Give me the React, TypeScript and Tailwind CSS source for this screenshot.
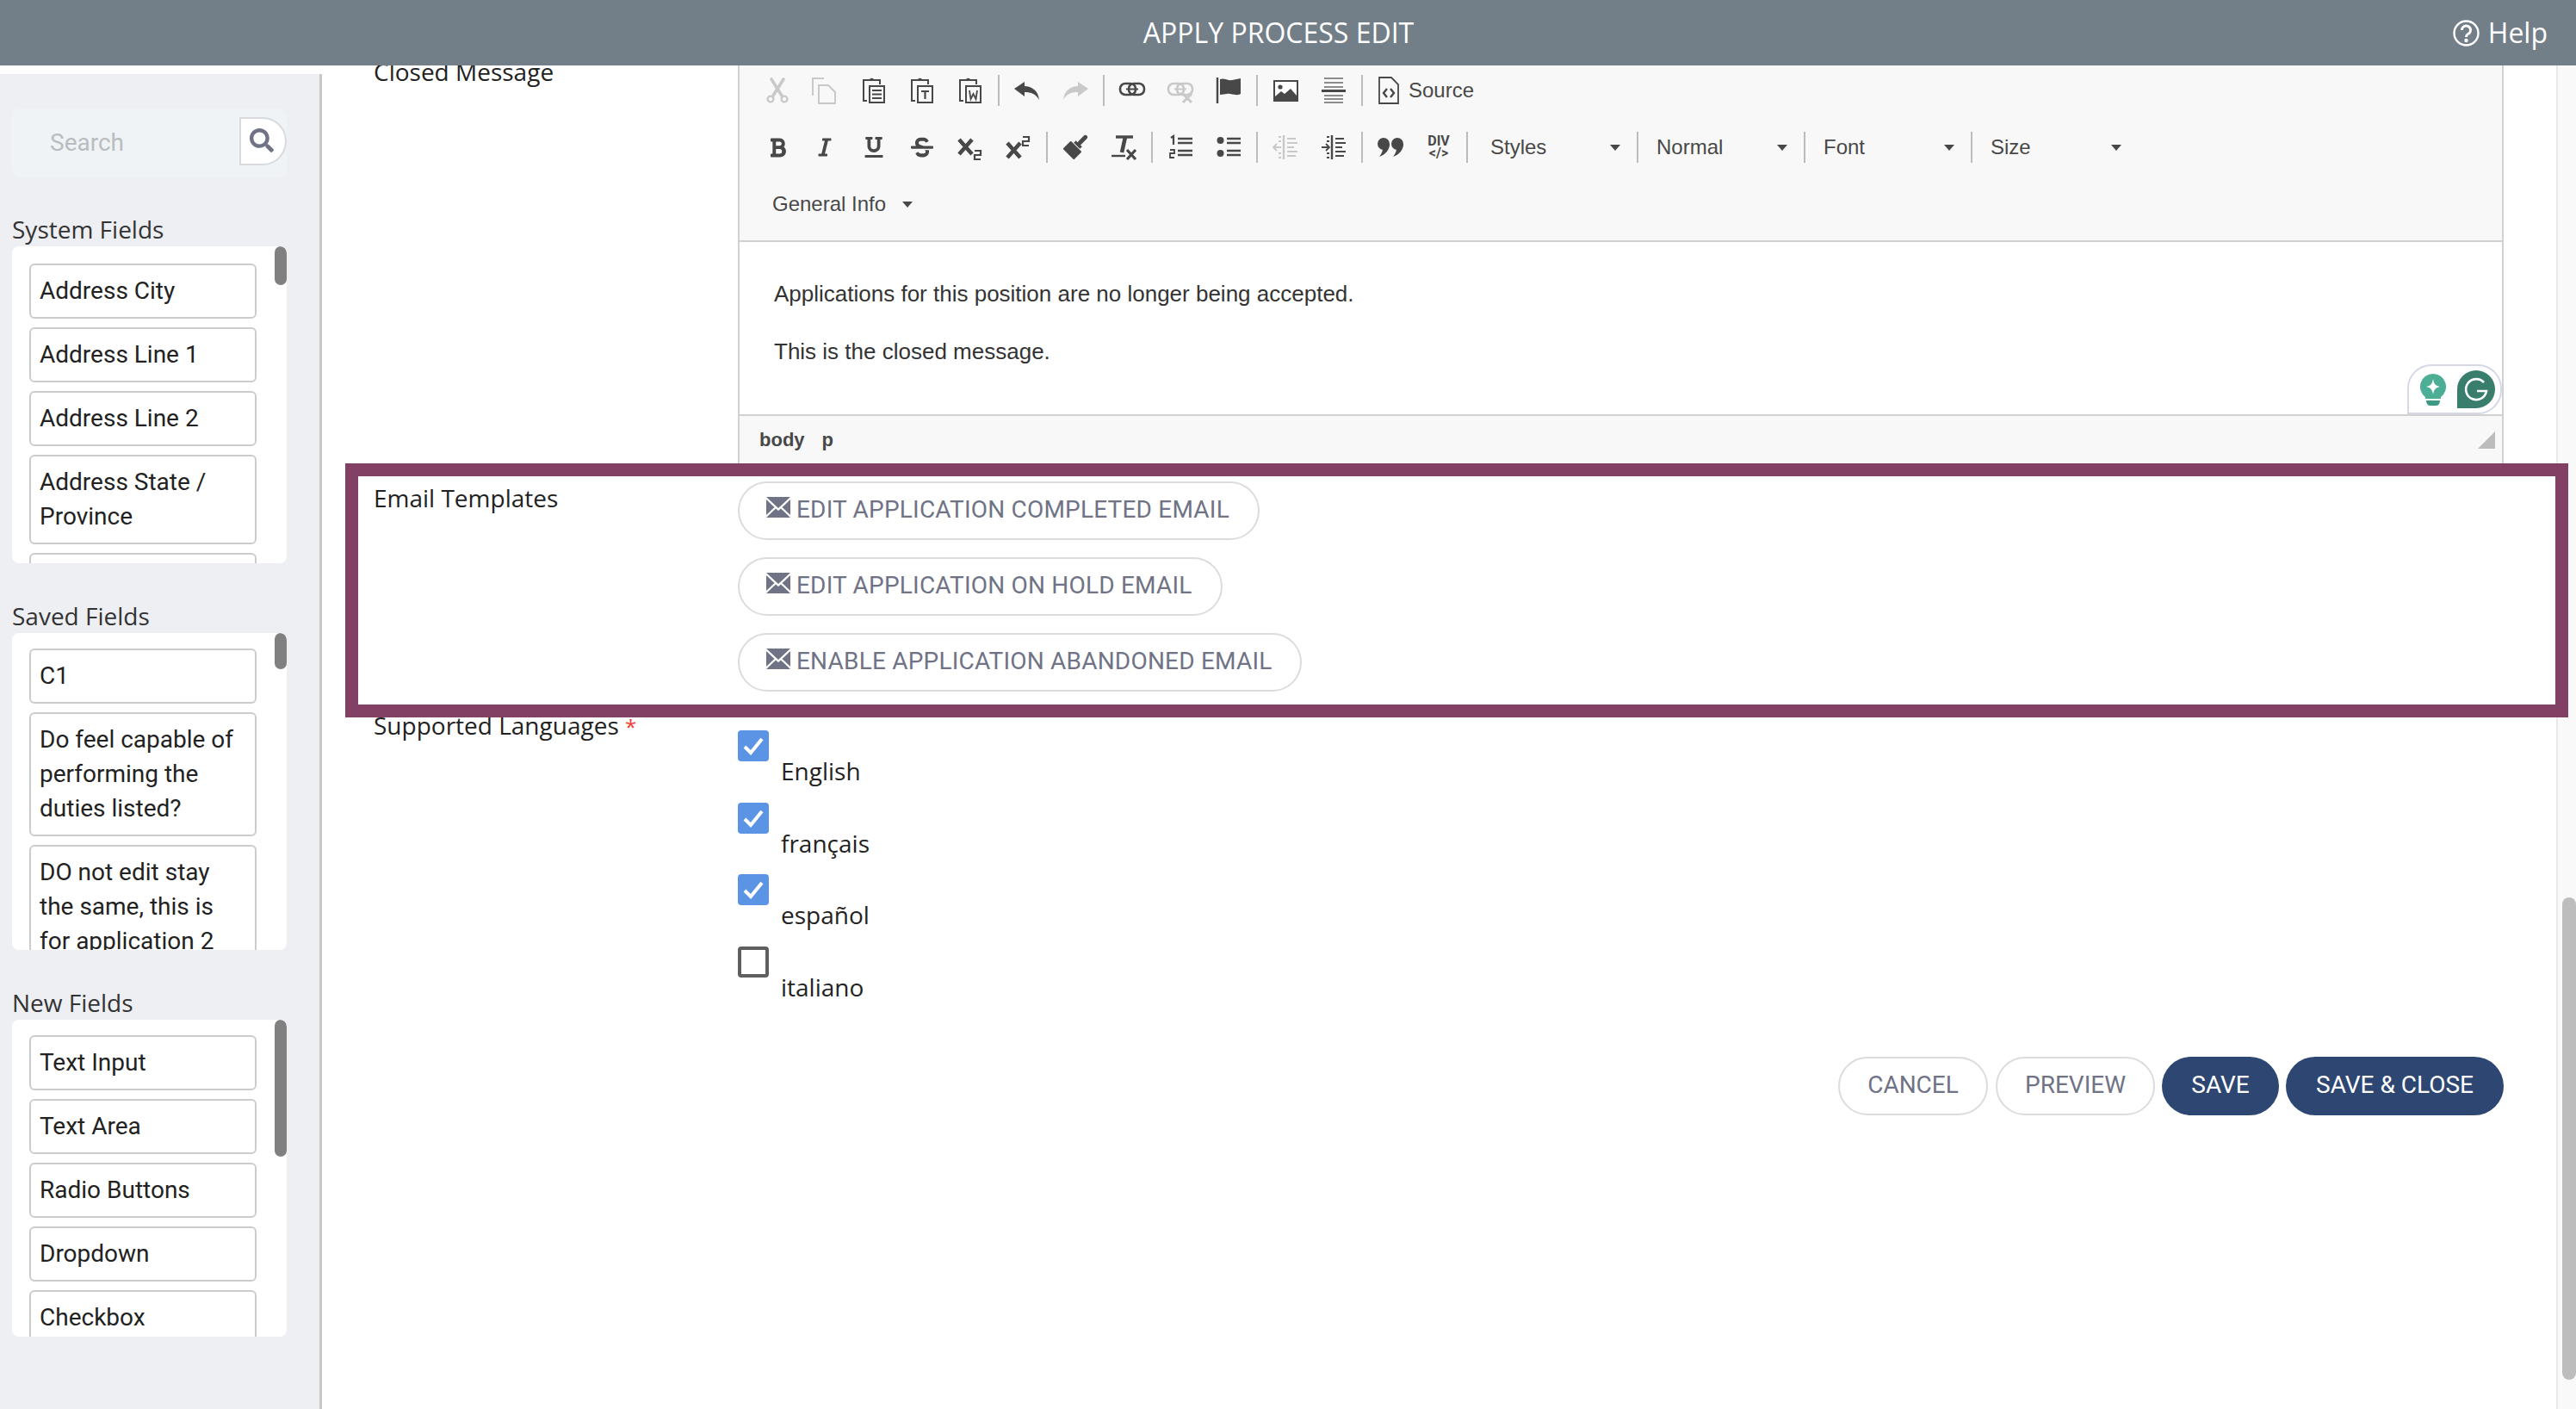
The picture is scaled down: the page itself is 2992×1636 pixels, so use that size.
import React from "react";
import { FaSearch, FaBold, FaItalic, FaUnderline, FaStrikethrough } from "react-icons/fa";

const DARK = "#484848";
const OFF = "#c9c9c9";

function Ic({ children, w = 32, h = 32 }: { children: React.ReactNode; w?: number; h?: number }) {
  return (
    <svg width={w} height={h} viewBox="0 0 32 32" fill="none">
      {children}
    </svg>
  );
}

const Cut = () => (
  <Ic>
    <g stroke={OFF} strokeWidth="3.6" strokeLinecap="round">
      <path d="M9 3 L21 22" />
      <path d="M23 3 L11 22" />
      <circle cx="8" cy="26" r="3.4" strokeWidth="2.4" />
      <circle cx="24" cy="26" r="3.4" strokeWidth="2.4" />
    </g>
  </Ic>
);
const Copy = () => (
  <div className="mr-[5px]">
    <Ic>
      <g stroke={OFF} strokeWidth="2" fill="#f8f8f8">
        <path d="M3 22 V2 H16" />
        <path d="M10 10 H21 L29 18 V31 H10 Z" />
      </g>
    </Ic>
  </div>
);
const Board = ({ children }: { children: React.ReactNode }) => (
  <Ic>
    <path d="M9 4 H4 V28 H8" stroke={DARK} strokeWidth="2" />
    <path d="M18 4 H23 V9" stroke={DARK} strokeWidth="2" />
    <path d="M9 5 V3 H11 A3 3 0 0 1 16 3 H18 V5 Z" fill={DARK} />
    <rect x="11" y="11" width="17" height="19" stroke={DARK} strokeWidth="2" fill="#f8f8f8" />
    {children}
  </Ic>
);
const Paste = () => (
  <Board>
    <path d="M14 16 H25 M14 20.5 H25 M14 25 H25" stroke={DARK} strokeWidth="2" />
  </Board>
);
const PasteT = () => (
  <Board>
    <path d="M15 17 H24 M19.5 17 V26" stroke={DARK} strokeWidth="2.2" />
  </Board>
);
const PasteW = () => (
  <Board>
    <path d="M15 16 L16.5 26 L19.5 20 L22.5 26 L24 16" stroke={DARK} strokeWidth="1.8" />
  </Board>
);
const Undo = ({ c = DARK, flip = false }: { c?: string; flip?: boolean }) => (
  <svg width="30" height="21" viewBox="0 0 30 21" style={flip ? { transform: "scaleX(-1)" } : undefined}>
    <path d="M0 8 L12 0 V5 C20 5 28 10 29 21 C25 14 20 12 12 12 V17 Z" fill={c} />
  </svg>
);
const LinkI = ({ c = DARK, x = false }: { c?: string; x?: boolean }) => (
  <Ic>
    <g stroke={c} strokeWidth="2.6" fill="none">
      <rect x="2" y="8" width="18" height="13" rx="6" />
      <rect x="12" y="8" width="18" height="13" rx="6" />
      <path d="M9 14.5 H23" strokeWidth="2" />
    </g>
    {x && <path d="M19 20 L29 30 M29 20 L19 30" stroke={c} strokeWidth="3" />}
  </Ic>
);
const Flag = () => (
  <Ic>
    <path d="M3 1 V31" stroke={DARK} strokeWidth="2.4" />
    <path d="M6 3 C11 1 15 5 20 4 L30 2 V20 C24 23 19 19 14 20 L6 21 Z" fill={DARK} />
  </Ic>
);
const ImageI = () => (
  <Ic>
    <rect x="3" y="5" width="27" height="23" stroke={DARK} strokeWidth="2" fill="#fff" />
    <circle cx="10" cy="12" r="2.6" fill={DARK} />
    <path d="M4 27 V23 L11 17 L15 20 L22 14 L29 22 V27 Z" fill={DARK} />
  </Ic>
);
const Hr = () => (
  <Ic>
    <g stroke="#8c8c8c" strokeWidth="1.8">
      <path d="M5 2 H27 M5 7 H27 M5 12 H27 M5 22 H27 M5 26 H27 M5 30 H27" />
    </g>
    <path d="M2 16.5 H30" stroke={DARK} strokeWidth="3" />
  </Ic>
);
const Doc = () => (
  <svg width="24" height="32" viewBox="0 0 24 32" fill="none">
    <path d="M1 1 H15 L23 9 V31 H1 Z" stroke={DARK} strokeWidth="1.8" fill="#f8f8f8" />
    <path d="M10 14 L6 19 L10 24 M14 14 L18 19 L14 24" stroke={DARK} strokeWidth="2.4" />
  </svg>
);
const Brush = () => (
  <Ic>
    <g transform="rotate(45 16 16)" fill={DARK}>
      <rect x="13.5" y="-3" width="5" height="14" rx="2.5" />
      <rect x="11" y="10" width="10" height="3.5" />
      <rect x="7" y="14.5" width="18" height="13" rx="1" />
    </g>
  </Ic>
);
const ClearFmt = () => (
  <Ic>
    <path d="M7 4 H27" stroke={DARK} strokeWidth="3.4" />
    <path d="M18 4 L14 22" stroke={DARK} strokeWidth="4.6" />
    <path d="M2 26 H18" stroke={DARK} strokeWidth="2.4" />
    <path d="M20 19 L30 30 M30 19 L20 30" stroke={DARK} strokeWidth="3.2" />
  </Ic>
);
const SubI = () => (
  <Ic>
    <path d="M3 7 L18 24 M18 7 L3 24" stroke={DARK} strokeWidth="4.6" />
    <path d="M21 20 H28 V25 H21 V30 H28" stroke={DARK} strokeWidth="2.2" />
  </Ic>
);
const SupI = () => (
  <Ic>
    <path d="M3 11 L18 28 M18 11 L3 28" stroke={DARK} strokeWidth="4.6" />
    <path d="M21 4 H28 V9 H21 V14 H28" stroke={DARK} strokeWidth="2.2" />
  </Ic>
);
const Quote = () => (
  <Ic>
    <g fill={DARK}>
      <circle cx="8" cy="12" r="7" />
      <path d="M15 12 C15 20 9 25 3 27 C6 23 7 20 7 17 Z" />
      <circle cx="24" cy="12" r="7" />
      <path d="M31 12 C31 20 25 25 19 27 C22 23 23 20 23 17 Z" />
    </g>
  </Ic>
);
const Ol = () => (
  <Ic>
    <path d="M13 6 H30 M13 11 H30 M13 20 H30 M13 25 H30" stroke={DARK} strokeWidth="2.4" />
    <path d="M5 5 L8 3 V13" stroke={DARK} strokeWidth="2.2" />
    <path d="M4 19 H9 V23 H4 V28 H9" stroke={DARK} strokeWidth="1.8" />
  </Ic>
);
const Ul = () => (
  <Ic>
    <circle cx="6.5" cy="8" r="4" fill={DARK} />
    <circle cx="6.5" cy="23" r="4" fill={DARK} />
    <path d="M14 6 H30 M14 11 H30 M14 20 H30 M14 25 H30" stroke={DARK} strokeWidth="2.4" />
  </Ic>
);
const Indent = ({ c = DARK, out = false }: { c?: string; out?: boolean }) => (
  <Ic>
    <path d="M14 2 V30" stroke={c} strokeWidth="2.4" />
    <path d="M18 6 H28 M18 11 H30 M18 16 H26 M18 21 H30 M18 26 H28" stroke={c} strokeWidth="2" />
    <path d="M8 4 H11 M8 9 H11 M8 23 H11 M8 28 H11" stroke={c} strokeWidth="2" />
    {out ? (
      <path d="M11 16 H3 M6 12 L2 16 L6 20" stroke={c} strokeWidth="1.8" fill="none" />
    ) : (
      <path d="M2 16 H10 M7 12 L11 16 L7 20" stroke={c} strokeWidth="1.8" fill="none" />
    )}
  </Ic>
);
const DivI = () => (
  <div className="flex flex-col items-center font-['Roboto',sans-serif] text-[16px] font-bold leading-[14px] text-[#484848]">
    <span>DIV</span>
    <span>&lt;/&gt;</span>
  </div>
);

const Btn = ({ children }: { children: React.ReactNode }) => (
  <div className="flex h-full w-[56px] shrink-0 items-center justify-center">{children}</div>
);
const Sep = () => <div className="mx-[4px] h-[36px] w-[2px] shrink-0 bg-[#bcbcbc]" />;
const ComboSep = ({ first = false }: { first?: boolean }) => (
  <div className={first ? "ml-[4px] h-[36px] w-[2px] shrink-0 bg-[#bcbcbc]" : "h-[36px] w-[2px] shrink-0 bg-[#bcbcbc]"} />
);
const Caret = () => (
  <div className="h-0 w-0 border-x-[6px] border-t-[7px] border-x-transparent border-t-[#484848]" />
);
const Combo = ({ label, className }: { label: string; className: string }) => (
  <div className={`flex h-full shrink-0 items-center justify-between pr-[19px] text-[24px] text-[#484848] ${className}`}>
    <span>{label}</span>
    <Caret />
  </div>
);

const Toolbar = () => (
  <div className="flex h-[205px] flex-col border-b-2 border-[#d1d1d1] bg-[#f8f8f8] pl-[16px] font-['Liberation_Sans',sans-serif]">
    <div className="mb-[4px] flex h-[58px] items-center">
      <Btn><Cut /></Btn>
      <Btn><Copy /></Btn>
      <Btn><Paste /></Btn>
      <Btn><PasteT /></Btn>
      <Btn><PasteW /></Btn>
      <Sep />
      <Btn><Undo /></Btn>
      <Btn><Undo c="#c9c9c9" flip /></Btn>
      <Sep />
      <Btn><LinkI /></Btn>
      <Btn><LinkI c="#c9c9c9" x /></Btn>
      <Btn><Flag /></Btn>
      <Sep />
      <Btn><ImageI /></Btn>
      <Btn><Hr /></Btn>
      <Sep />
      <div className="ml-[14px] flex items-center gap-[11px] text-[24px] text-[#484848]">
        <Doc />
        <span>Source</span>
      </div>
    </div>
    <div className="flex h-[66px] items-center">
      <Btn><FaBold size={25} color={DARK} /></Btn>
      <Btn><FaItalic size={24} color={DARK} className="mr-[3px]" /></Btn>
      <Btn><FaUnderline size={24} color={DARK} /></Btn>
      <Btn><FaStrikethrough size={26} color={DARK} /></Btn>
      <Btn><SubI /></Btn>
      <Btn><SupI /></Btn>
      <Sep />
      <Btn><Brush /></Btn>
      <Btn><ClearFmt /></Btn>
      <Sep />
      <Btn><Ol /></Btn>
      <Btn><Ul /></Btn>
      <Sep />
      <Btn><Indent c="#c9c9c9" out /></Btn>
      <Btn><Indent /></Btn>
      <Sep />
      <Btn><Quote /></Btn>
      <Btn><DivI /></Btn>
      <ComboSep first />
      <Combo label="Styles" className="w-[196px] pl-[26px]" />
      <ComboSep />
      <Combo label="Normal" className="w-[192px] pl-[21px]" />
      <ComboSep />
      <Combo label="Font" className="w-[192px] pl-[21px]" />
      <ComboSep />
      <Combo label="Size" className="w-[192px] pl-[21px]" />
    </div>
    <div className="flex h-[66px] items-center">
      <Combo label="General Info" className="w-[204px] pl-[22px]" />
    </div>
  </div>
);

const Grammarly = () => (
  <div className="absolute bottom-0 right-0 flex h-[58px] w-[110px] items-center justify-between rounded-t-[28px] rounded-br-[28px] border-2 border-[#d5d8e6] bg-white pl-[13px] pr-[6px]">
    <svg width="30" height="37" viewBox="0 0 30 37">
      <path d="M15 0 A15 15 0 0 1 24 27 V29 H6 V27 A15 15 0 0 1 15 0 Z" fill="#4cae95" />
      <path d="M15 6 C16 12 18 14 23 15 C18 16 16 18 15 24 C14 18 12 16 7 15 C12 14 14 12 15 6 Z" fill="#fff" />
      <path d="M7 31 H23 C23 34 21 37 19 37 H11 C9 37 7 34 7 31 Z" fill="#3c9a84" />
    </svg>
    <svg width="44" height="44" viewBox="0 0 44 44">
      <path d="M22 0 A22 22 0 0 1 22 44 H0 V22 A22 22 0 0 1 22 0 Z" fill="#397d6d" />
      <path d="M31 14 A12 12 0 1 0 34 24 H23" stroke="#fff" strokeWidth="2.6" fill="none" />
    </svg>
  </div>
);

const Editor = () => (
  <div className="flex flex-1 flex-col border-x-2 border-[#d1d1d1]">
    <Toolbar />
    <div className="relative h-[200px] pl-[40px] pt-[45px] font-['Liberation_Sans',sans-serif] text-[26px] leading-[30px] text-[#333]">
      <p>Applications for this position are no longer being accepted.</p>
      <p className="mt-[37px]">This is the closed message.</p>
      <Grammarly />
    </div>
    <div className="flex flex-1 items-center justify-between border-t-2 border-[#d1d1d1] bg-[#f8f8f8] pl-[23px] pr-[8px]">
      <div className="flex gap-[20px] font-['Liberation_Sans',sans-serif] text-[22px] font-bold text-[#484848]">
        <span>body</span>
        <span>p</span>
      </div>
      <svg width="20" height="20" viewBox="0 0 20 20"><path d="M20 0 V20 H0 Z" fill="#bcbcbc" /></svg>
    </div>
  </div>
);

const Mail = () => (
  <svg className="mb-[6px]" width="28" height="24" viewBox="0 0 28 24" fill="#6f7385">
    <path d="M0 0 H28 L14 13 Z" />
    <path d="M0 3 L9.5 12 L0 21 Z" />
    <path d="M28 3 L18.5 12 L28 21 Z" />
    <path d="M0 24 L11 13.5 L14 16 L17 13.5 L28 24 Z" />
  </svg>
);

const PillOutline = ({ children, className = "" }: { children: React.ReactNode; className?: string }) => (
  <div className={`flex h-[68px] items-center rounded-[34px] border-2 border-[#dcdcdc] bg-white pb-[2px] font-['Roboto',sans-serif] text-[28px] text-[#6f7385] ${className}`}>
    {children}
  </div>
);
const MailBtn = ({ label }: { label: string }) => (
  <PillOutline className="w-fit gap-[7px] pl-[31px] pr-[33px] tracking-[0.2px]">
    <Mail />
    <span>{label}</span>
  </PillOutline>
);
const PillSolid = ({ label, className }: { label: string; className: string }) => (
  <div className={`flex h-[68px] items-center justify-center rounded-[34px] bg-[#2e4672] pb-[3px] font-['Roboto',sans-serif] text-[28px] text-white ${className}`}>
    {label}
  </div>
);

const Check = ({ label, on = true }: { label: string; on?: boolean }) => (
  <div className="flex h-[83.5px] flex-col">
    {on ? (
      <div className="flex h-[36px] w-[36px] items-center justify-center rounded-[4px] bg-[#5b94e4]">
        <svg width="26" height="22" viewBox="0 0 26 22" fill="none"><path d="M3 12 L10 19 L23 3" stroke="#fff" strokeWidth="4" /></svg>
      </div>
    ) : (
      <div className="h-[36px] w-[36px] rounded-[4px] border-[4px] border-[#5f5f5f]" />
    )}
    <span className="ml-[50px] mt-[-9px] text-[28px] leading-[40px] text-[#222]">{label}</span>
  </div>
);

const Item = ({ children }: { children: React.ReactNode }) => (
  <div className="mb-[10px] shrink-0 rounded-[6px] border-2 border-[#cccccc] bg-white px-[10px] py-[10px] text-[28px] leading-[40px] text-[#222]">
    {children}
  </div>
);

const FieldList = ({ title, items, thumb, top }: { title: string; items: string[]; thumb: string; top: string }) => (
  <div className="flex flex-col">
    <div className="flex h-[34px] items-center pb-[6px] font-['Open_Sans',sans-serif] text-[28px] text-[#333]">{title}</div>
    <div className={`relative h-[368px] overflow-hidden rounded-[8px] bg-white pl-[20px] pr-[35px] font-['Roboto',sans-serif] ${top}`}>
      {items.map((t) => (
        <Item key={t}>{t}</Item>
      ))}
      <div className={`absolute right-0 top-0 w-[14px] rounded-[7px] bg-[#808080] ${thumb}`} />
    </div>
  </div>
);

const Sidebar = () => (
  <aside className="mt-[10px] flex w-[374px] shrink-0 flex-col border-r-[3px] border-[#c8c8c8] bg-[#edeff3] pl-[14px] pr-[38px] pt-[40px]">
    <div className="flex h-[80px] items-center rounded-[10px] bg-[#f0f3f6]">
      <span className="flex-1 pl-[44px] font-['Roboto',sans-serif] text-[28px] text-[#b9bcc0]">Search</span>
      <div className="mb-[5px] flex h-[56px] w-[55px] items-center justify-center rounded-r-[28px] border-2 border-[#d8dade] bg-white pb-[2px] pr-[4px]">
        <FaSearch size={28} color="#6f7385" />
      </div>
    </div>
    <div className="mt-[46px] flex flex-col gap-[47px]">
      <FieldList
        title="System Fields"
        top="pt-[20px]"
        thumb="h-[45px]"
        items={["Address City", "Address Line 1", "Address Line 2", "Address State / Province", "Address Zip"]}
      />
      <FieldList
        title="Saved Fields"
        top="pt-[18px]"
        thumb="h-[42px]"
        items={["C1", "Do feel capable of performing the duties listed?", "DO not edit stay the same, this is for application 2"]}
      />
      <FieldList
        title="New Fields"
        top="pt-[18px]"
        thumb="h-[159px]"
        items={["Text Input", "Text Area", "Radio Buttons", "Dropdown", "Checkbox"]}
      />
    </div>
  </aside>
);

export default function App() {
  return (
    <div className="flex h-[1636px] w-[2992px] flex-col overflow-hidden bg-white font-['Open_Sans',sans-serif]">
      <header className="relative z-10 grid h-[76px] shrink-0 grid-cols-[1fr_auto_1fr] items-center bg-[#727e88] pr-[22px] text-white">
        <div />
        <div className="text-[32px]">APPLY PROCESS EDIT</div>
        <div className="mr-[11px] flex items-center justify-end gap-[10px] text-[32px]">
          <svg width="31" height="31" viewBox="0 0 31 31" fill="none">
            <circle cx="15.5" cy="15.5" r="14" stroke="#fff" strokeWidth="2.4" />
            <path d="M10.5 12 A5 5 0 1 1 17.5 16.5 C16 17.3 15.5 18 15.5 20" stroke="#fff" strokeWidth="3" />
            <circle cx="15.5" cy="24" r="2.2" fill="#fff" />
          </svg>
          <span>Help</span>
        </div>
      </header>
      <div className="flex min-h-0 flex-1">
        <Sidebar />
        <main className="flex min-w-0 flex-1 flex-col px-[61px] text-[28px] text-[#222]">
          <section className="flex h-[462px] shrink-0">
            <div className="w-[422px] shrink-0 overflow-hidden">
              <div className="-ml-[1px] -mt-[13px] leading-[40px]">Closed Message</div>
            </div>
            <Editor />
          </section>
          <section className="relative z-[5] -ml-[34px] -mr-[75px] flex h-[295px] shrink-0 border-[15px] border-[#824065] bg-white pl-[18px]">
            <div className="w-[423px] shrink-0 pt-[5px] leading-[40px]">Email Templates</div>
            <div className="flex flex-col gap-[20px] pt-[6px]">
              <MailBtn label="EDIT APPLICATION COMPLETED EMAIL" />
              <MailBtn label="EDIT APPLICATION ON HOLD EMAIL" />
              <MailBtn label="ENABLE APPLICATION ABANDONED EMAIL" />
            </div>
          </section>
          <section className="flex h-[394px] shrink-0">
            <div className="-ml-[1px] -mt-[11px] w-[423px] shrink-0 leading-[40px]">
              Supported Languages <span className="text-[24px] text-[#f0392f]">*</span>
            </div>
            <div className="flex flex-col pt-[15px]">
              <Check label="English" />
              <Check label="français" />
              <Check label="español" />
              <Check label="italiano" on={false} />
            </div>
          </section>
          <div className="flex justify-end gap-[8px]">
            <PillOutline className="mr-[1px] w-[174px] justify-center">CANCEL</PillOutline>
            <PillOutline className="w-[185px] justify-center">PREVIEW</PillOutline>
            <PillSolid label="SAVE" className="w-[136px]" />
            <PillSolid label="SAVE & CLOSE" className="w-[253px]" />
          </div>
        </main>
        <div className="w-[23px] shrink-0 border-l-2 border-[#e8e8e8] bg-[#f9f9f9]">
          <div className="ml-auto mt-[966px] h-[560px] w-[16px] rounded-full bg-[#bdbdbd]" />
        </div>
      </div>
    </div>
  );
}
